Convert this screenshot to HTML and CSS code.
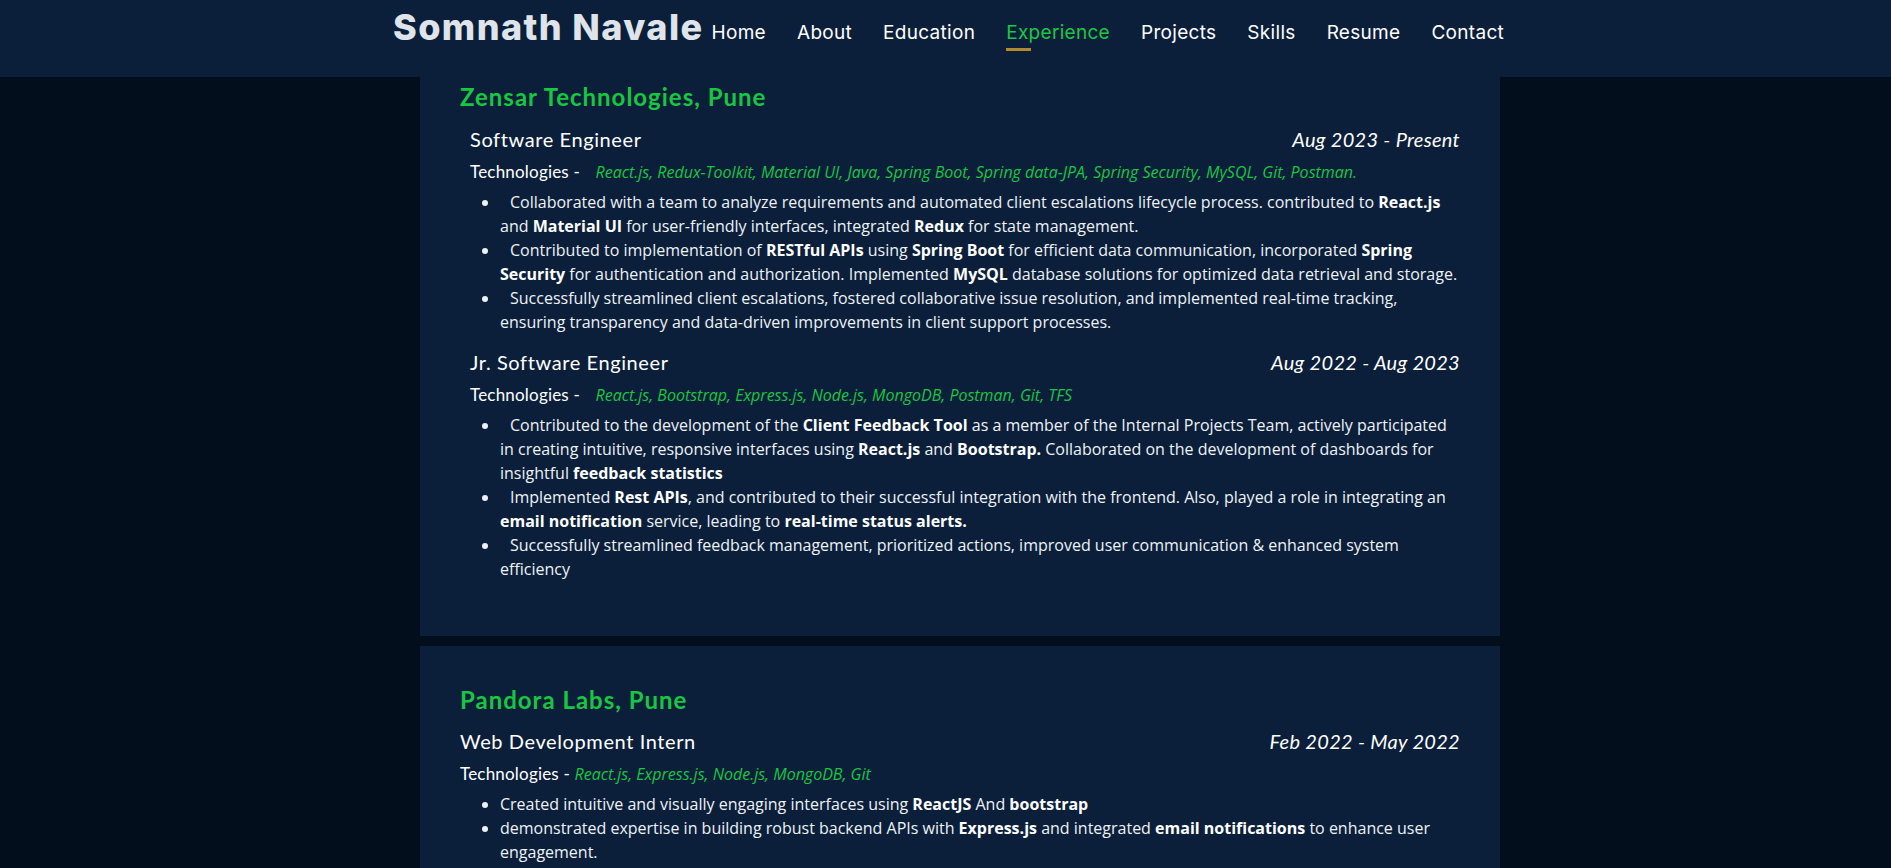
FILE: index.html
```html
<!DOCTYPE html>
<html lang="en">
<head>
<meta charset="utf-8">
<title>Somnath Navale - Experience</title>
<link rel="stylesheet" href="styles.css">
</head>
<body>
<header class="topbar">
  <div class="topbar-inner">
    <div class="brand">Somnath Navale</div>
    <nav class="nav">
      <a class="nav-link" href="#">Home</a>
      <a class="nav-link" href="#">About</a>
      <a class="nav-link" href="#">Education</a>
      <a class="nav-link active" href="#">Experience</a>
      <a class="nav-link" href="#">Projects</a>
      <a class="nav-link" href="#">Skills</a>
      <a class="nav-link" href="#">Resume</a>
      <a class="nav-link" href="#">Contact</a>
    </nav>
  </div>
</header>

<main class="page">
  <section class="card">
    <h2 class="company">Zensar Technologies, Pune</h2>

    <div class="job job-indented">
      <div class="role">
        <span class="role-title">Software Engineer</span>
        <span class="role-date">Aug 2023 - Present</span>
      </div>
      <div class="tech">Technologies - <span class="tech-list spaced">React.js, Redux-Toolkit, Material UI, Java, Spring Boot, Spring data-JPA, Spring Security, MySQL, Git, Postman.</span></div>
      <ul class="points">
        <li>Collaborated with a team to analyze requirements and automated client escalations lifecycle process. contributed to <b>React.js</b> and <b>Material UI</b> for user-friendly interfaces, integrated <b>Redux</b> for state management.</li>
        <li>Contributed to implementation of <b>RESTful APIs</b> using <b>Spring Boot</b> for efficient data communication, incorporated <b>Spring Security</b> for authentication and authorization. Implemented <b>MySQL</b> database solutions for optimized data retrieval and storage.</li>
        <li>Successfully streamlined client escalations, fostered collaborative issue resolution, and implemented real-time tracking, ensuring transparency and data-driven improvements in client support processes.</li>
      </ul>
    </div>

    <div class="job job-indented">
      <div class="role">
        <span class="role-title">Jr. Software Engineer</span>
        <span class="role-date">Aug 2022 - Aug 2023</span>
      </div>
      <div class="tech">Technologies - <span class="tech-list spaced">React.js, Bootstrap, Express.js, Node.js, MongoDB, Postman, Git, TFS</span></div>
      <ul class="points">
        <li>Contributed to the development of the <b>Client Feedback Tool</b> as a member of the Internal Projects Team, actively participated in creating intuitive, responsive interfaces using <b>React.js</b> and <b>Bootstrap.</b> Collaborated on the development of dashboards for insightful <b>feedback statistics</b></li>
        <li>Implemented <b>Rest APIs</b>, and contributed to their successful integration with the frontend. Also, played a role in integrating an <b>email notification</b> service, leading to <b>real-time status alerts.</b></li>
        <li>Successfully streamlined feedback management, prioritized actions, improved user communication &amp; enhanced system efficiency</li>
      </ul>
    </div>
  </section>

  <section class="card">
    <h2 class="company">Pandora Labs, Pune</h2>
    <div class="job">
      <div class="role">
        <span class="role-title">Web Development Intern</span>
        <span class="role-date">Feb 2022 - May 2022</span>
      </div>
      <div class="tech">Technologies - <span class="tech-list">React.js, Express.js, Node.js, MongoDB, Git</span></div>
      <ul class="points">
        <li>Created intuitive and visually engaging interfaces using <b>ReactJS</b> And <b>bootstrap</b></li>
        <li>demonstrated expertise in building robust backend APIs with <b>Express.js</b> and integrated <b>email notifications</b> to enhance user engagement.</li>
      </ul>
    </div>
  </section>
</main>
</body>
</html>
```
FILE: styles.css
```css
* { box-sizing: border-box; }

html, body {
  margin: 0;
  padding: 0;
}

body {
  background: #020e1b;
  color: #eef2f6;
  font-family: "Open Sans", "Liberation Sans", sans-serif;
  font-size: 16px;
  line-height: 24px;
  overflow: hidden;
}

/* ---------- top bar ---------- */
.topbar {
  position: fixed;
  top: 0;
  left: 0;
  right: 0;
  height: 77px;
  background: #0b1f3b;
  z-index: 10;
}

.topbar-inner {
  display: flex;
  align-items: flex-start;
  padding: 5px 0 0 393px;
}

.brand {
  font-family: Inter, "Liberation Sans", sans-serif;
  font-weight: 800;
  font-size: 36px;
  line-height: 44px;
  color: #dfe4ea;
  letter-spacing: 1.4px;
}

.nav {
  display: flex;
  gap: 31px;
  margin-left: 8px;
  padding-top: 15px;
}

.nav-link {
  display: flex;
  flex-direction: column;
  font-family: Inter, "Liberation Sans", sans-serif;
  font-size: 19px;
  line-height: 26px;
  letter-spacing: 0.3px;
  color: #ffffff;
  text-decoration: none;
}

.nav-link.active {
  color: #1bc744;
}

.nav-link.active::after {
  content: "";
  display: block;
  width: 25px;
  height: 3px;
  margin-top: 2px;
  background: #b08a2e;
}

/* ---------- content ---------- */
.page {
  width: 1080px;
  margin-left: 420px;
  padding-top: 44px;
  display: flex;
  flex-direction: column;
  gap: 10px;
}

.card {
  background: #0b1f3b;
  padding: 37px 40px 55px 40px;
}

.company {
  margin: 0;
  padding-top: 2px;
  font-family: Lato, "Liberation Sans", sans-serif;
  font-weight: 700;
  font-size: 24px;
  line-height: 30px;
  letter-spacing: 1px;
  color: #17c641;
}

.card:first-child .company {
  padding-top: 1px;
  padding-bottom: 1px;
}

.job {
  margin-top: 13px;
}

.job + .job {
  margin-top: 15px;
}

.role {
  display: flex;
  justify-content: space-between;
  align-items: baseline;
  font-family: Lato, "Liberation Sans", sans-serif;
  font-size: 20px;
  line-height: 26px;
  color: #ffffff;
}

.role-title {
  letter-spacing: 0.6px;
}

.role-date {
  font-style: italic;
  letter-spacing: 0.3px;
}

.tech {
  margin-top: 8px;
  font-family: Lato, "Liberation Sans", sans-serif;
  font-size: 17px;
  line-height: 24px;
  letter-spacing: 0.2px;
  color: #ffffff;
}

.tech-list {
  font-family: "Open Sans", "Liberation Sans", sans-serif;
  font-size: 16px;
  font-style: italic;
  letter-spacing: 0;
  color: #17c641;
}

.tech-list.spaced {
  margin-left: 11px;
}

.job-indented .role,
.job-indented .tech {
  padding-left: 10px;
}

.job-indented .points li {
  text-indent: 10px;
}

.points {
  margin: 6px 0 0 0;
  padding-left: 40px;
  list-style: disc;
}

.points b {
  font-weight: 700;
  color: #ffffff;
}
```
